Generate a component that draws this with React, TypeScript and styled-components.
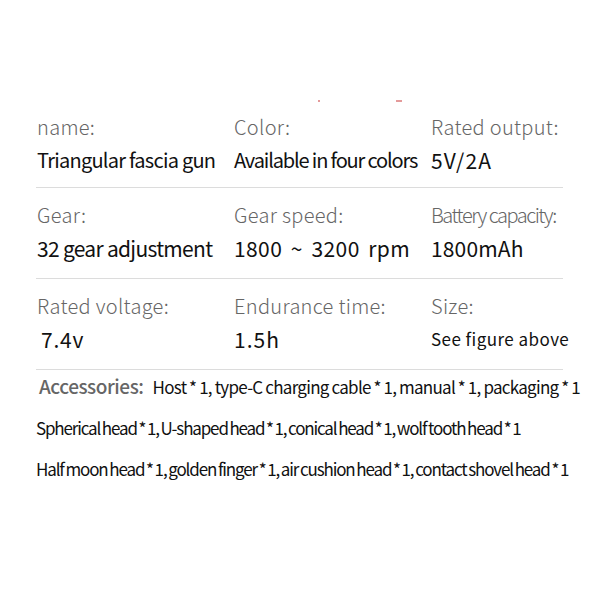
import React from "react";
import styled, { createGlobalStyle } from "styled-components";

const Global = createGlobalStyle`
  html, body { margin: 0; padding: 0; background: #fff; }
  body { font-family: "Noto Sans CJK SC", "Noto Sans", sans-serif; }
`;

const Page = styled.div`
  width: 600px;
  height: 600px;
  background: #fff;
  display: flex;
  flex-direction: column;
  padding: 0 37px 0 36px;
  box-sizing: border-box;
`;

const TopStrip = styled.div`
  height: 103px;
  display: flex;
  align-items: flex-end;
  gap: 76px;
  padding-left: 282px;
  padding-bottom: 1px;
  box-sizing: border-box;
`;

const RedMark = styled.span<{ $w: number }>`
  display: block;
  width: ${(p) => p.$w}px;
  height: 2px;
  background: #e49a9a;
`;

const Row = styled.div<{ $first?: boolean }>`
  display: grid;
  grid-template-columns: 197px 197px 1fr;
  height: ${(p) => (p.$first ? 85 : 91)}px;
  border-bottom: 1px solid #dcdcdc;
  box-sizing: border-box;
`;

const Cell = styled.div`
  display: flex;
  flex-direction: column;
  padding-left: 1px;
`;

const Label = styled.div<{ $first?: boolean; $ls?: number }>`
  font-size: 20px;
  font-weight: 300;
  line-height: 22px;
  color: #666;
  margin-top: ${(p) => (p.$first ? 13 : 16)}px;
  letter-spacing: ${(p) => p.$ls ?? 0.3}px;
  white-space: nowrap;
`;

const Value = styled.div<{ $size?: number; $ls?: number; $ws?: number; $dx?: number }>`
  font-size: ${(p) => p.$size ?? 21}px;
  line-height: 24px;
  color: #111;
  margin-top: 10px;
  margin-left: ${(p) => p.$dx ?? 0}px;
  letter-spacing: ${(p) => p.$ls ?? 0}px;
  word-spacing: ${(p) => p.$ws ?? 0}px;
  white-space: nowrap;
`;

const Accessories = styled.div`
  display: flex;
  flex-direction: column;
  gap: 17px;
  padding-top: 4px;
`;

const AccLine = styled.div<{ $ws: number; $ls: number }>`
  font-size: 17px;
  line-height: 24px;
  color: #111;
  letter-spacing: ${(p) => p.$ls}px;
  word-spacing: ${(p) => p.$ws}px;
  white-space: nowrap;
`;

const AccLabel = styled.span`
  font-size: 19px;
  color: #666;
  font-weight: 500;
  letter-spacing: -0.45px;
  word-spacing: 0;
  margin-left: 3px;
  margin-right: 9px;
`;

type Item = {
  label: string;
  value: string;
  labelLs?: number;
  size?: number;
  ls?: number;
  ws?: number;
  dx?: number;
};

const rows: Item[][] = [
  [
    { label: "name:", value: "Triangular fascia gun", size: 20, ls: -0.75, ws: 0 },
    { label: "Color:", value: "Available in four colors", size: 20, ls: -1.15, ws: 0 },
    { label: "Rated output:", value: "5V/2A", ls: 1.2 },
  ],
  [
    { label: "Gear:", value: "32 gear adjustment", ls: -0.7, ws: 0 },
    { label: "Gear speed:", value: "1800 ~ 3200 rpm", ls: 0.4, ws: 3.5 },
    { label: "Battery capacity:", value: "1800mAh", labelLs: -1.5, ls: 0.15 },
  ],
  [
    { label: "Rated voltage:", value: "7.4v", dx: 4, ls: 0.8 },
    { label: "Endurance time:", value: "1.5h", ls: 1 },
    { label: "Size:", value: "See figure above", size: 17, ls: 0.45 },
  ],
];

export default function App() {
  return (
    <>
      <Global />
      <Page>
        <TopStrip>
          <RedMark $w={2} />
          <RedMark $w={6} />
        </TopStrip>
        {rows.map((r, i) => (
          <Row key={i} $first={i === 0}>
            {r.map((c) => (
              <Cell key={c.label}>
                <Label $first={i === 0} $ls={c.labelLs}>
                  {c.label}
                </Label>
                <Value $size={c.size} $ls={c.ls} $ws={c.ws} $dx={c.dx}>
                  {c.value}
                </Value>
              </Cell>
            ))}
          </Row>
        ))}
        <Accessories>
          <AccLine $ls={-0.72} $ws={-0.3}>
            <AccLabel>Accessories:</AccLabel>Host * 1, type-C charging cable * 1, manual * 1, packaging * 1
          </AccLine>
          <AccLine $ls={-1.15} $ws={-1}>
            Spherical head * 1, U-shaped head * 1, conical head * 1, wolf tooth head * 1
          </AccLine>
          <AccLine $ls={-1.15} $ws={-0.9}>
            Half moon head * 1, golden finger * 1, air cushion head * 1, contact shovel head * 1
          </AccLine>
        </Accessories>
      </Page>
    </>
  );
}
